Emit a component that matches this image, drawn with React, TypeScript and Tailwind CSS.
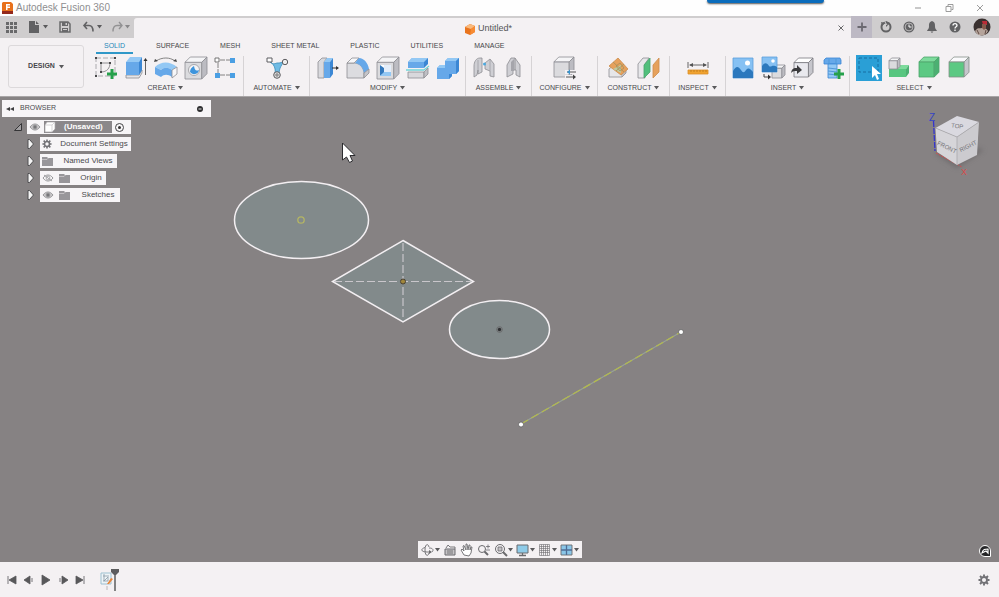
import type { ReactNode } from 'react';

const BLUE = '#66a8e9';
const BLUE_LIGHT = '#93c8f4';
const BLUE_DARK = '#3b87d4';
const INK = '#6b6b6e';

function Icon({ children }: { children: ReactNode }) {
  return (
    <svg viewBox="0 0 24 24" className="size-6 overflow-visible" fill="none" strokeLinejoin="round" aria-hidden="true">
      {children}
    </svg>
  );
}

function Small({ children }: { children: ReactNode }) {
  return (
    <svg viewBox="0 0 14 14" className="size-3.5 shrink-0 overflow-visible" fill="none" aria-hidden="true">
      {children}
    </svg>
  );
}

function Caret() {
  return (
    <svg viewBox="0 0 5 4" className="h-1 w-[5px] shrink-0" aria-hidden="true">
      <path d="M0 0h5L2.500 3.500z" fill="#5a5a5c" />
    </svg>
  );
}

type BoxProps = { front: string; top: string; side: string; line: string; x?: number; y?: number; size?: number };

// small oblique box: front face plus top and right faces
function Box({ front, top, side, line, x = 2, y = 2, size = 20 }: BoxProps) {
  const d = size * 0.24;
  const r = x + size;
  const b = y + size;
  return (
    <g stroke={line} strokeWidth="0.8">
      <path d={`M${x} ${y + d}h${size - d}v${size - d}h${d - size}z`} fill={front} />
      <path d={`M${x} ${y + d}l${d} ${-d}h${size - d}l${-d} ${d}z`} fill={top} />
      <path d={`M${r - d} ${y + d}L${r} ${y}V${b - d}L${r - d} ${b}z`} fill={side} />
    </g>
  );
}

const gray = { front: '#dbdbde', top: '#f5f5f7', side: '#bcbcc2', line: '#8e8e93' };
const green = { front: '#5cc983', top: '#7ddb9c', side: '#4bb072', line: '#4ba36b' };

function Plus({ x, y }: { x: number; y: number }) {
  return <path d={`M${x} ${y - 5}v10M${x - 5} ${y}h10`} stroke="#25a04b" strokeWidth="3" />;
}

const icons: Record<string, ReactNode> = {
  sketch: (
    <>
      <path d="M2 2h19v18H2z" stroke="#9a9a9d" strokeWidth="0.8" strokeDasharray="5 2" />
      <path d="M7 7h9c0 5-3 9-9 9z" stroke="#77777a" strokeWidth="0.8" />
      <path d="M1 1h2v2H1zM20 1h2v2h-2zM1 19h2v2H1zM6 6h2v2H6zM15 6h2v2h-2zM6 15h2v2H6z" fill="#48484a" />
      <Plus x={18} y={18} />
    </>
  ),
  extrude: (
    <>
      <path d="M2 19h13l3-5v3l-3 5H2z" fill="#e5e5e8" stroke="#8e8e93" strokeWidth="0.8" />
      <path d="M2 6h13v13H2z" fill={BLUE} />
      <path d="M2 6l4-5h12l-3 5z" fill={BLUE_LIGHT} />
      <path d="M15 6l3-5v13l-3 5z" fill={BLUE_DARK} />
      <path d="M21.500 19V4" stroke="#555" strokeWidth="0.9" />
      <path d="M19.500 5l2-3 2 3z" fill="#333" />
    </>
  ),
  revolve: (
    <>
      <path d="M2 5C8 1 16 1 21 5" stroke="#777" strokeWidth="0.9" />
      <path d="M0 6l1-3 3 2zM23 6l-1-3-3 2z" fill="#444" />
      <path d="M1 11c6-6 15-6 22 0l-5 3c-4-3-8-3-11 0z" fill={BLUE_LIGHT} />
      <path d="M1 11l6 3c3-3 7-3 11 0v7c-4-3-8-3-11 0l-6-3z" fill={BLUE} />
      <path d="M18 14l5-3v7l-5 4z" fill="#f6f6f8" stroke="#8e8e93" strokeWidth="0.8" />
    </>
  ),
  hole: (
    <>
      <Box {...gray} x={1} y={1} size={22} />
      <circle cx="10" cy="14" r="5.500" fill="#f4f4f6" stroke="#98989d" strokeWidth="0.8" />
      <path d="M10 10c1 5 2 5 5 4a5 5 0 01-9 2c0-3 2-5 4-6z" fill="#3d94dc" />
    </>
  ),
  pattern: (
    <>
      <path d="M6 4h10M4 7v10M6 19h10" stroke="#777" strokeWidth="0.9" strokeDasharray="5 1" />
      <path d="M1 2h4v4H1z" stroke="#666" strokeWidth="0.9" fill="#fff" />
      <path d="M16 2h5v5h-5zM1 17h5v5H1zM16 17h5v5h-5z" fill="#4b9fe3" />
    </>
  ),
  automate: (
    <>
      <path d="M3 3c3 6 6 5 9 4 3 0 5 0 8-3-3 5-6 7-6 15h-4c1-8-1-10-7-16z" fill="#6fbbe4" stroke="#3a8bb9" strokeWidth="0.8" />
      <path d="M2 2h5v4H2z" fill="#fff" stroke="#5d5d60" />
      <circle cx="20" cy="6" r="2.700" fill="#eee" stroke="#5d5d60" />
      <circle cx="12" cy="19" r="3.300" fill="#ddd" stroke="#5d5d60" />
      <circle cx="12" cy="19" r="1.200" stroke="#5d5d60" strokeWidth="0.8" />
    </>
  ),
  presspull: (
    <>
      <path d="M2 6l4-4h5L8 6v16H2z" fill="#d9d9dd" stroke="#8e8e93" strokeWidth="0.8" />
      <path d="M8 6h6v16H8z" fill={BLUE} />
      <path d="M8 6l3-4h6l-3 4z" fill={BLUE_LIGHT} />
      <path d="M14 6l3-4v16l-3 4z" fill={BLUE_DARK} />
      <path d="M16 12h6" stroke="#333" />
      <path d="M20 10l3 2-3 2z" fill="#333" />
    </>
  ),
  fillet: (
    <>
      <path d="M1 7h7c6 0 10 5 10 11v4H1z" fill="#dcdce0" stroke="#8e8e93" strokeWidth="0.8" />
      <path d="M1 7l5-5h7L8 7z" fill="#f7f7f9" stroke="#8e8e93" strokeWidth="0.8" />
      <path d="M9 7l4-5c5 0 9 5 10 11l-5 4c-1-6-4-9-9-10z" fill={BLUE} />
      <path d="M18 17l5-4v4l-5 5z" fill="#c5c5ca" stroke="#8e8e93" strokeWidth="0.8" />
    </>
  ),
  shell: (
    <>
      <Box {...gray} x={1} y={1} size={22} />
      <path d="M4 9h11v11H4z" fill="#fff" />
      <path d="M4 9l4 3v5l-4 3z" fill="#3379bd" />
      <path d="M4 20l4-4h7v4z" fill={BLUE_LIGHT} />
      <path d="M8 9h7v7H8z" fill="#e4eefa" />
    </>
  ),
  split: (
    <>
      <path d="M2 6l4-4h16l-4 4v6H2z" fill={BLUE} />
      <path d="M2 6l4-4h16l-4 4z" fill={BLUE_LIGHT} />
      <path d="M18 6l4-4v6l-4 4z" fill={BLUE_DARK} />
      <path d="M2 16h16v6H2z" fill="#d8d8dc" stroke="#8e8e93" strokeWidth="0.8" />
      <path d="M18 16l4-4v6l-4 4z" fill="#c0c0c5" stroke="#8e8e93" strokeWidth="0.8" />
      <path d="M0 14h18l5-4" stroke="#72d5d8" strokeWidth="1.300" />
    </>
  ),
  combine: (
    <>
      <path d="M1 12l3-3h5V5l3-3h11v13l-3 3h-4v2l-3 3H1z" fill={BLUE} />
      <path d="M1 12l3-3h5v3zM9 5l3-3h11l-3 3z" fill={BLUE_LIGHT} />
      <path d="M20 5l3-3v13l-3 3zM13 18h3v2l-3 3z" fill={BLUE_DARK} />
    </>
  ),
  joint: (
    <>
      <path d="M2 10c0-4 2-8 6-8h2v14l-4 2v-4l-1 5-3 2z" fill="#cfcfd4" stroke="#8e8e93" strokeWidth="0.8" />
      <path d="M6 4v12" stroke="#9f9fa4" strokeWidth="0.8" />
      <path d="M13 7l5-4 4 5v13l-4-1v-5l-5-2z" fill="#cfcfd4" stroke="#8e8e93" strokeWidth="0.8" />
      <path d="M18 3v12" stroke="#9f9fa4" strokeWidth="0.8" />
      <circle cx="12.500" cy="8" r="1.500" fill="#4ba9df" />
    </>
  ),
  asbuilt: (
    <>
      <path d="M5 21V9l4-7h4l5 7v12l-4-2v-5h-3v4z" fill="#cfcfd4" stroke="#8e8e93" strokeWidth="0.8" />
      <path d="M13 2v12" stroke="#8e8e93" strokeWidth="0.9" />
      <path d="M9 6l3-3v12H9z" fill="#a5a5ab" />
    </>
  ),
  configure: (
    <>
      <Box {...gray} x={1} y={1} size={20} />
      <path d="M12 16h12M12 21h12" stroke="#f4f1f3" strokeWidth="4" />
      <path d="M14 16h9M13 21h9" stroke="#444" strokeWidth="0.9" />
      <path d="M17 13.500v5l-3-2.500z" fill="#3792cc" />
      <path d="M20 18.500v5l3-2.500z" fill="#444" />
    </>
  ),
  offsetPlane: (
    <>
      <path d="M2 13l5-4h8v12H2z" fill="#e6e6e9" stroke="#8e8e93" strokeWidth="0.8" />
      <path d="M15 12l4 1v4l-4 4" fill="#c0c0c5" stroke="#8e8e93" strokeWidth="0.8" />
      <path d="M2 10l9-8 10 11-7 6z" fill="#e6a15c" stroke="#cd8d4b" strokeWidth="0.8" />
      <path d="M6 13l8-4v8z" fill="#bdc9a0" />
      <path d="M6 6l11 10M17 8l-8 7M9 10l4-3 4 5-4 3z" stroke="#a5905a" strokeWidth="0.8" />
    </>
  ),
  midPlane: (
    <>
      <path d="M1 8l5-6h6L8 8v14H1z" fill="#e7e7ea" stroke="#8e8e93" strokeWidth="0.8" />
      <path d="M7 9l6-7v14l-6 6z" fill="#50bf7c" stroke="#46a56c" strokeWidth="0.8" />
      <path d="M16 9l6-7v14l-6 6z" fill="#e6a15c" stroke="#cd8d4b" strokeWidth="0.8" />
    </>
  ),
  measure: (
    <>
      <path d="M2 6v6M22 6v6M4 9h16" stroke="#555" strokeWidth="0.9" />
      <path d="M3 9l4-2v4zM21 9l-4-2v4z" fill="#555" />
      <path d="M2 14h20v4H2z" fill="#f0a330" stroke="#dd9127" strokeWidth="0.8" />
      <path d="M5 14v2M8 14v2M11 14v2M14 14v2M17 14v2M20 14v2" stroke="#b9761b" strokeWidth="0.8" />
    </>
  ),
  canvas: (
    <>
      <path d="M2 2h20v20H2z" fill="#86c1f3" stroke="#5c9edb" strokeWidth="0.8" />
      <path d="M2 15c3-5 5-5 8-1 2 3 3 3 5 0 3-3 4-1 7 2v6H2z" fill="#2b78bd" />
      <circle cx="16.500" cy="7" r="2.500" fill="#fff" />
    </>
  ),
  decal: (
    <>
      <Box {...gray} x={11} y={9} size={13} />
      <path d="M1 1h15v15H1z" fill="#86c1f3" stroke="#5c9edb" strokeWidth="0.8" />
      <path d="M1 10c3-4 5-3 7 0 2 2 3-2 8 1v5H1z" fill="#2b78bd" />
      <circle cx="12" cy="5" r="1.800" fill="#fff" />
      <path d="M3 18v3h5" stroke="#444" />
      <path d="M7 18.500l3 2.500-3 2.500z" fill="#333" />
    </>
  ),
  insert: (
    <>
      <Box front="#e9e9ee" top="#fff" side="#c6c6cc" line="#7a7a7f" x={3} y={2} size={19} />
      <path d="M0 17c1-5 3-5 6-5V9l5 5-5 4v-3c-3 0-4 0-6 2z" fill="#3b3b3d" />
    </>
  ),
  fastener: (
    <>
      <path d="M3 4l2-2h14l1 2v4H3z" fill={BLUE} stroke={BLUE_DARK} strokeWidth="0.8" />
      <path d="M7 8h9v14H7z" fill={BLUE_LIGHT} stroke={BLUE_DARK} strokeWidth="0.8" />
      <path d="M7 12l9 1M7 15l9 1M7 18l9 1M8 3v5M15 3v5" stroke="#5199d9" />
      <Plus x={18} y={18} />
    </>
  ),
  select: (
    <>
      <path d="M-1-1h26v26H-1z" fill="#2a9fd6" />
      <path d="M2 2h19v14H2z" stroke="#176fa2" strokeDasharray="3 2" />
      <path d="M15 10v12l3-3 2 5 2-1-2-5h4z" fill="#fff" />
    </>
  ),
  bodies: (
    <>
      <path d="M2 13h17v8H2z" fill="#58c680" />
      <path d="M10 13l3-4h9l-3 4z" fill="#7ddb9c" />
      <path d="M19 13l3-4v8l-3 4z" fill="#4bb072" />
      <Box {...gray} x={2} y={2} size={11} />
    </>
  ),
  solidBody: <Box {...green} x={2} y={1} size={20} />,
  face: <Box front="#5cc983" top="#fafafc" side="#c6c6cc" line="#859089" x={2} y={1} size={20} />,
};

const groups = [
  { name: 'CREATE', width: 'w-[156px]', tools: ['sketch', 'extrude', 'revolve', 'hole', 'pattern'] },
  { name: 'AUTOMATE', width: 'w-[66px]', tools: ['automate'] },
  { name: 'MODIFY', width: 'w-[156px]', tools: ['presspull', 'fillet', 'shell', 'split', 'combine'] },
  { name: 'ASSEMBLE', width: 'w-[66px]', tools: ['joint', 'asbuilt'] },
  { name: 'CONFIGURE', width: 'w-[66px]', tools: ['configure'] },
  { name: 'CONSTRUCT', width: 'w-[72px]', tools: ['offsetPlane', 'midPlane'] },
  { name: 'INSPECT', width: 'w-14', tools: ['measure'] },
  { name: 'INSERT', width: 'w-[124px]', tools: ['canvas', 'decal', 'insert', 'fastener'] },
  { name: 'SELECT', width: 'w-32', tools: ['select', 'bodies', 'solidBody', 'face'] },
];

const tabs = ['SOLID', 'SURFACE', 'MESH', 'SHEET METAL', 'PLASTIC', 'UTILITIES', 'MANAGE'];

function TitleBar() {
  return (
    <header className="relative flex h-4 items-center bg-[#fefefe] pr-3">
      <svg viewBox="0 0 12 12" className="ml-0.5 size-3" aria-hidden="true">
        <path d="M0 1l1-1h8l2 2v9l-1 1H1l-1-1z" fill="#e8711c" />
        <path d="M0 9h11v3H0z" fill="#93281c" />
        <path d="M4 2h4v1.500H5.500v1H8V6H5.500v2H4z" fill="#fff" />
      </svg>
      <h1 className="ml-0.5 flex-1 text-[10px] leading-4 text-[#8e8e90]">Autodesk Fusion 360</h1>
      <div className="absolute top-0 right-[175px] h-[3px] w-[117px] rounded-b-sm bg-[#0a6cbc] shadow-[0_1px_2px_#555]" />
      <div className="flex gap-[17px]">
        <button aria-label="Minimize">
          <Small>
            <path d="M4 7h6" stroke="#929292" />
          </Small>
        </button>
        <button aria-label="Restore">
          <Small>
            <path d="M4 5.500h5v5H4zM6 5V3.500h5v5H9.500" stroke="#929292" strokeWidth="0.9" />
          </Small>
        </button>
        <button aria-label="Close">
          <Small>
            <path d="M4 4l6 6M10 4l-6 6" stroke="#929292" strokeWidth="0.9" />
          </Small>
        </button>
      </div>
    </header>
  );
}

function DocumentBar() {
  return (
    <div className="flex h-[22px] bg-[#cfcdce]">
      <div className="flex w-[134px] items-center pl-1">
        <button aria-label="Data panel">
          <Small>
            <path d="M2 2h3v3H2zM6 2h3v3H6zM10 2h3v3h-3zM2 6h3v3H2zM6 6h3v3H6zM10 6h3v3h-3zM2 10h3v3H2zM6 10h3v3H6zM10 10h3v3h-3z" fill="#69696b" />
          </Small>
        </button>
        <button aria-label="File" className="ml-2.5 flex items-center gap-px">
          <Small>
            <path d="M1 1h6v4h4v8H1zM8 1l3 3H8z" fill="#626264" />
          </Small>
          <Caret />
        </button>
        <button aria-label="Save" className="ml-2.5">
          <Small>
            <path d="M2 2h8l2 2v8H2z" stroke="#69696b" strokeWidth="1.500" />
            <path d="M4 2h6v4H4zM4 8h6v4H4z" fill="#69696b" />
            <path d="M7.500 3h1.500v2H7.500zM5 9h4v1H5z" fill="#cfcdce" />
          </Small>
        </button>
        <button aria-label="Undo" className="ml-2.5 flex items-center gap-px">
          <Small>
            <path d="M5 2L2 5.500 5 9M2 5.500h5c3 0 4 2 4 6" stroke="#626264" strokeWidth="1.600" />
          </Small>
          <Caret />
        </button>
        <button aria-label="Redo" className="ml-2 flex items-center gap-px opacity-60">
          <Small>
            <path d="M9 2l3 3.500L9 9M12 5.500H7c-3 0-4 2-4 6" stroke="#6b6b6d" strokeWidth="1.400" />
          </Small>
          <Caret />
        </button>
      </div>
      <div className="mt-0.5 flex flex-1 items-center rounded-tl-[3px] bg-[#f4f1f3] pr-1">
        <div className="flex flex-1 items-center justify-center gap-[3px] pt-0.5 pl-2 text-[9px] text-[#555557]">
          <svg viewBox="0 0 10 11" className="h-[11px] w-2.5" aria-hidden="true">
            <path d="M0 3l5-3 5 2v6L5 11 0 9z" fill="#e9741d" />
            <path d="M0 3l5-3 5 2-4 3z" fill="#f9ba7d" />
            <path d="M6 5l4-3v6l-5 3z" fill="#f78b33" />
          </svg>
          Untitled*
        </div>
        <button aria-label="Close document">
          <svg viewBox="0 0 12 12" className="size-3" aria-hidden="true">
            <path d="M3.500 3.500l5 5M8.500 3.500l-5 5" stroke="#68686a" />
          </svg>
        </button>
      </div>
      <button aria-label="New document" className="flex w-[21px] items-center justify-center bg-[#bdb9c4]">
        <svg viewBox="0 0 10 10" className="size-2.5" aria-hidden="true">
          <path d="M5 .5v9M.5 5h9" stroke="#6b6971" strokeWidth="1.800" />
        </svg>
      </button>
      <div className="flex items-center gap-[9px] pr-2 pl-[7px]">
        <button aria-label="Extensions">
          <Small>
            <circle cx="7" cy="7" r="4.500" stroke="#626264" strokeWidth="2" />
            <path d="M7 7V1l4 2zM2 2l4 1-3 3z" fill="#626264" />
            <path d="M6 2l2 3" stroke="#cfcdce" />
          </Small>
        </button>
        <button aria-label="Job status">
          <Small>
            <circle cx="7" cy="7" r="5.500" fill="#626264" />
            <circle cx="7" cy="7" r="3.900" stroke="#cfcdce" strokeWidth="0.8" />
            <path d="M7 4.500V7h2.500" stroke="#fff" />
          </Small>
        </button>
        <button aria-label="Notifications">
          <Small>
            <path d="M7 1c3 1 3 3 3 5 0 3 1 3 2 5H2c1-2 2-2 2-5 0-2 0-4 3-5zM5.500 11.500h3L7 13z" fill="#626264" />
          </Small>
        </button>
        <button aria-label="Help">
          <Small>
            <circle cx="7" cy="7" r="5.500" fill="#626264" />
            <path d="M5 5.500C5 3 9 3 9 5.500 9 7 7 6.500 7 8.500M7 9.500V11" stroke="#fff" strokeWidth="1.300" />
          </Small>
        </button>
        <button aria-label="Account" className="ml-0.5">
          <svg viewBox="0 0 18 18" className="size-[18px]" aria-hidden="true">
            <circle cx="9" cy="9" r="8.500" fill="#39302f" />
            <path d="M2 13c3-4 4-2 7-3 3 0 4 0 6 3-3 6-10 6-13 0z" fill="#b5a49b" />
            <path d="M9 3h5v4h-4z" fill="#bb2c38" />
            <path d="M9 6h4v4l-2 2-2-2z" fill="#85594b" />
            <path d="M4 12l2 4M13 12l-1 4" stroke="#604a43" />
          </svg>
        </button>
      </div>
    </div>
  );
}

function Ribbon() {
  return (
    <div className="flex h-[59px] border-b border-[#a8a5a6] bg-[#f4f1f3] text-[7px] text-[#47474a]">
      <button className="mt-[7px] mr-1 ml-2 flex h-[43px] w-[76px] items-center justify-center gap-1 rounded-[3px] border border-[#dcd9db] font-bold">
        DESIGN <Caret />
      </button>
      <div className="flex-1">
        <nav className="flex h-4 gap-[15px] pl-2">
          {tabs.map((tab) => (
            <button
              key={tab}
              className={tab === 'SOLID' ? 'border-b-2 border-[#3098c8] px-2 pt-0.5 text-[#2487b8]' : 'border-b-2 border-transparent px-2 pt-0.5'}
            >
              {tab}
            </button>
          ))}
        </nav>
        <div className="mt-0.5 flex">
          {groups.map(({ name, width, tools }) => (
            <div key={name} className={`${width} shrink-0 border-[#d6d3d5] not-last:border-r`}>
              <div className="flex justify-center gap-1.5">
                {tools.map((tool) => (
                  <button key={tool} aria-label={tool}>
                    <Icon>{icons[tool]}</Icon>
                  </button>
                ))}
              </div>
              <button className="flex h-4 w-full items-center justify-center gap-[3px]">
                {name} <Caret />
              </button>
            </div>
          ))}
        </div>
      </div>
    </div>
  );
}

function Eye({ off = false }: { off?: boolean }) {
  return (
    <svg viewBox="0 0 12 10" className="h-2.5 w-3 shrink-0" fill="none" aria-hidden="true">
      <path d="M1 5c3-4 7-4 10 0-3 4-7 4-10 0z" stroke="#98989b" fill={off ? 'none' : '#c9c7c9'} />
      <circle cx="6" cy="5" r="1.900" fill={off ? 'none' : '#77777a'} stroke="#98989b" strokeWidth="0.8" />
      {off && <path d="M2 2l8 6" stroke="#98989b" strokeWidth="0.9" />}
    </svg>
  );
}

function Folder() {
  return (
    <svg viewBox="0 0 12 10" className="h-2.5 w-3 shrink-0" aria-hidden="true">
      <path d="M0 1h5l1 1h5v8H0z" fill="#98969a" />
      <path d="M0 3.500h5L6.500 2" stroke="#d5d3d6" strokeWidth="0.7" fill="none" />
    </svg>
  );
}

function Gear({ className }: { className: string }) {
  return (
    <svg viewBox="0 0 12 12" className={className} fill="none" aria-hidden="true">
      <circle cx="6" cy="6" r="3" stroke="#717175" strokeWidth="1.900" />
      <path d="M6 .5v2M6 9.500v2M.5 6h2M9.500 6h2M2 2l1.500 1.500M8.500 8.500L10 10M10 2L8.500 3.500M3.500 8.500L2 10" stroke="#717175" strokeWidth="1.900" />
    </svg>
  );
}

const nodes = [
  { label: 'Document Settings', width: 'w-[91px]', icon: <Gear className="size-2.5 shrink-0" /> },
  { label: 'Named Views', width: 'w-[77px]', icon: <Folder /> },
  { label: 'Origin', width: 'w-[66px]', icon: <><Eye off /><Folder /></> },
  { label: 'Sketches', width: 'w-20', icon: <><Eye /><Folder /></> },
];

function BrowserPanel() {
  return (
    <aside className="absolute top-[3px] left-0.5 w-[209px] text-[8px] text-[#4a4a4d]">
      <div className="flex h-[17px] items-center bg-[#f7f5f7] pr-[7px] pl-1">
        <svg viewBox="0 0 8 6" className="h-1.5 w-2" aria-hidden="true">
          <path d="M4 1v4L0 3zM8 1v4L4 3z" fill="#3e3e40" />
        </svg>
        <h2 className="ml-1.5 flex-1 text-[7px]">BROWSER</h2>
        <button aria-label="Collapse">
          <svg viewBox="0 0 8 8" className="size-2" aria-hidden="true">
            <circle cx="4" cy="4" r="3" fill="#2d2d2f" />
            <path d="M2.500 4h3" stroke="#fff" strokeWidth="0.9" />
          </svg>
        </button>
      </div>
      <ul className="mt-[3px] flex flex-col gap-[3px]">
        <li className="flex h-3.5 items-center pl-3">
          <svg viewBox="0 0 8 8" className="mr-[5px] size-2" aria-hidden="true">
            <path d="M7.500.5v7h-7z" fill="#a09ea0" stroke="#353537" />
          </svg>
          <div className="flex h-full w-[104px] items-center gap-[3px] bg-[#f7f5f7] pl-0.5">
            <Eye />
            <div className="flex h-3 w-[68px] items-center gap-2 bg-[#8b888b] font-bold text-white">
              <svg viewBox="0 0 12 12" className="size-3" aria-hidden="true">
                <path d="M1 4l2-3h8v7l-3 3H1z" fill="#fff" stroke="#aaa8aa" strokeWidth="0.7" />
                <path d="M1 4h7v7M8 4l3-3" fill="none" stroke="#c5c3c5" strokeWidth="0.7" />
              </svg>
              (Unsaved)
            </div>
            <input
              type="radio"
              aria-label="Activate component"
              defaultChecked
              className="size-[9px] shrink-0 appearance-none rounded-full border border-[#454547] bg-[#333] bg-clip-content p-0.5"
            />
          </div>
        </li>
        {nodes.map(({ label, width, icon }) => (
          <li key={label} className="flex h-3.5 items-center pl-[25px]">
            <svg viewBox="0 0 7 10" className="mr-1.5 h-2.5 w-[7px]" aria-hidden="true">
              <path d="M1 .5h1.500L6.500 5l-4 4.500H1z" fill="#f5f5f5" stroke="#4e4e50" />
            </svg>
            <div className={`${width} flex h-full items-center gap-[5px] bg-[#f7f5f7] pl-0.5`}>
              {icon}
              <span className="flex-1 text-center whitespace-nowrap">{label}</span>
            </div>
          </li>
        ))}
      </ul>
    </aside>
  );
}

function Sketches() {
  return (
    <svg viewBox="0 0 999 465" className="absolute top-0 left-0 h-[465px] w-[999px]" fill="none" aria-hidden="true">
      <g fill="#828a8b" stroke="#f3eff2" strokeWidth="1.500">
        <ellipse cx="301.500" cy="123" rx="67" ry="38.500" />
        <path d="M403 143.500L473.500 184.500 403 225 332.500 184.500z" />
        <ellipse cx="499.500" cy="232.500" rx="50" ry="29" />
      </g>
      <path d="M334 184.500h137M403 146v77" stroke="#c9c6cb" strokeWidth="1.200" strokeDasharray="8 3" />
      <circle cx="301" cy="123" r="3.200" stroke="#b4b564" strokeWidth="1.300" />
      <circle cx="403" cy="184.500" r="2.500" fill="#a0863a" stroke="#494033" />
      <circle cx="499.500" cy="232.500" r="2.800" stroke="#69696b" fill="#828a8b" />
      <circle cx="499.500" cy="232.500" r="1.700" fill="#2e2e30" />
      <path d="M521 327L681 235" stroke="#98a198" strokeWidth="1.200" />
      <path d="M521 327L681 235" stroke="#b3bb4c" strokeWidth="1.200" strokeDasharray="8 4" />
      <g fill="#fff" stroke="#555" strokeWidth="0.7">
        <circle cx="521" cy="327.500" r="2.500" />
        <circle cx="681" cy="235" r="2.500" />
      </g>
      <path d="M342.500 46v17l4-3 3 5.500 3-1.500-2.500-5.500h5z" fill="#fff" stroke="#2c2c2f" />
    </svg>
  );
}

function ViewCube() {
  return (
    <svg viewBox="0 0 75 80" className="absolute top-[3px] right-0 h-20 w-[75px]" fontFamily="Liberation Sans, sans-serif" aria-label="View cube">
      <defs>
        <filter id="cubeShadow" x="-30%" y="-30%" width="160%" height="160%">
          <feGaussianBlur stdDeviation="2.500" />
        </filter>
      </defs>
      <path d="M10 53l22-11 28 8-27 18z" fill="#625f61" opacity="0.6" filter="url(#cubeShadow)" />
      <path d="M9.500 21l1.500 30" stroke="#3434cf" strokeWidth="1.300" strokeDasharray="6 1" />
      <path d="M12 53l26 14" stroke="#d64c4c" strokeDasharray="2 1" />
      <path d="M11.500 28L33 16l22 6-22 15z" fill="#dad9e0" />
      <path d="M11.500 28L33 37v28L13 52z" fill="#d6d5d9" />
      <path d="M33 37l22-15-2 33-20 10z" fill="#cccbcf" />
      <path d="M11.500 28L33 37l22-15M33 37v28" stroke="#a9a8ac" strokeWidth="0.8" fill="none" />
      <g fontSize="6" fill="#77767a" textAnchor="middle">
        <text transform="translate(33 28) rotate(8)">TOP</text>
        <text transform="translate(22 49) rotate(26)">FRONT</text>
        <text transform="translate(45 48) rotate(-27)">RIGHT</text>
      </g>
      <text x="5" y="21" fontSize="10" fill="#3544c4">Z</text>
      <text x="37" y="75" fontSize="9" fill="#d64c4c">X</text>
    </svg>
  );
}

const navTools: { name: string; menu: boolean; drawing: ReactNode }[] = [
  {
    name: 'Orbit',
    menu: true,
    drawing: (
      <>
        <path d="M8 4C7 0 4 1 4 7s3 7 4 3" stroke={INK} strokeWidth="0.9" />
        <path d="M4 4.500C-1 6 0 9 6 9h4" stroke={INK} strokeWidth="0.9" />
        <path d="M8 5c4 0 5 2 3 4" stroke={INK} strokeWidth="0.9" />
        <path d="M8 7l3 2-3 2z" fill={INK} />
      </>
    ),
  },
  {
    name: 'Look at',
    menu: false,
    drawing: (
      <>
        <path d="M2 6h10v6H2z" fill="#c5c3c6" stroke={INK} />
        <path d="M3 5l2-3 2 2h5v2M4 8h6M4 10h6" stroke={INK} strokeWidth="0.9" />
      </>
    ),
  },
  {
    name: 'Pan',
    menu: false,
    drawing: <path d="M4 12L1 7l1-1 2 2-1-5 1-.5L6 7V1h1l1 6 1-5h1v5l1-3h1l-1 6-2 3z" stroke={INK} strokeWidth="0.9" fill="#fff" />,
  },
  {
    name: 'Zoom',
    menu: false,
    drawing: (
      <>
        <circle cx="5" cy="6" r="3.500" stroke={INK} />
        <path d="M7.500 8.500L11 12" stroke={INK} strokeWidth="2" />
        <path d="M9 3.500h4M11 1.500v4M9 7h4" stroke={INK} strokeWidth="0.8" />
      </>
    ),
  },
  {
    name: 'Fit',
    menu: true,
    drawing: (
      <>
        <circle cx="6" cy="6" r="4.500" stroke={INK} />
        <path d="M4 4h4v4H4z" fill="#c3c1c4" stroke={INK} strokeWidth="0.8" />
        <path d="M9 9l4 4" stroke={INK} strokeWidth="2" />
      </>
    ),
  },
  {
    name: 'Display settings',
    menu: true,
    drawing: (
      <>
        <path d="M1 2h11v8H1z" fill="#8ecbe8" stroke={INK} />
        <path d="M6.500 10v2M3 12.500h7" stroke={INK} strokeWidth="1.300" />
      </>
    ),
  },
  {
    name: 'Grid and snaps',
    menu: true,
    drawing: <path d="M1.500 1.500h10v11h-10zM1.500 3.500h10M1.500 5.500h10M1.500 7.500h10M1.500 9.500h10M3.500 1.500v11M5.500 1.500v11M7.500 1.500v11M9.500 1.500v11" stroke={INK} strokeWidth="0.6" />,
  },
  {
    name: 'Viewports',
    menu: true,
    drawing: (
      <>
        <path d="M1 2h11v10H1z" fill="#8ac6e8" stroke={INK} strokeWidth="0.9" />
        <path d="M6.500 2v10M1 7h11" stroke="#4f6d95" strokeWidth="1.300" />
      </>
    ),
  },
];

const playback = [
  { name: 'Go to start', d: 'M3 3v8M4 7l7-4v8z' },
  { name: 'Step back', d: 'M2 7l6-4v8zM10 5v4' },
  { name: 'Play', d: 'M3 2l8 5-8 5z' },
  { name: 'Step forward', d: 'M12 7L6 3v8zM4 5v4' },
  { name: 'Go to end', d: 'M11 3v8M10 7L3 3v8z' },
];

function Timeline() {
  return (
    <footer className="flex h-[35px] items-center bg-[#f4f1f3] pr-[9px] pl-[5px]">
      <div className="flex gap-[3px]">
        {playback.map(({ name, d }) => (
          <button key={name} aria-label={name}>
            <Small>
              <path d={d} fill="#58585a" stroke="#58585a" strokeWidth="0.8" />
            </Small>
          </button>
        ))}
      </div>
      <button aria-label="Sketch feature" className="ml-[13px]">
        <svg viewBox="0 0 20 24" className="h-6 w-5" fill="none" aria-hidden="true">
          <path d="M1 5h10v11H1z" stroke="#9dc0d1" fill="#eef4f7" />
          <path d="M3 8h6M4 6v7l4-4v4H3" stroke="#899ba6" strokeWidth="0.8" />
          <path d="M7 16l4-6 2 1-4 5z" fill="#e98538" />
          <path d="M7 18v4" stroke="#bab8ba" />
          <path d="M11 1h8v3l-3 3h-2l-3-3z" fill="#5c5c5e" />
          <path d="M15 6v17" stroke="#5c5c5e" strokeWidth="1.500" />
        </svg>
      </button>
      <button aria-label="Timeline settings" className="ml-auto">
        <Gear className="size-3" />
      </button>
    </footer>
  );
}

export default function App() {
  return (
    <div className="flex h-screen flex-col overflow-hidden bg-[#868283] font-['Liberation_Sans',Arial,sans-serif]">
      <TitleBar />
      <DocumentBar />
      <Ribbon />
      <main className="relative flex flex-1 items-end justify-center overflow-hidden">
        <Sketches />
        <BrowserPanel />
        <ViewCube />
        <div className="relative mb-1 flex h-[17px] items-center gap-[3px] bg-[#f4f1f3] px-[3px]">
          {navTools.map(({ name, menu, drawing }) => (
            <button key={name} aria-label={name} className="flex items-center">
              <Small>{drawing}</Small>
              {menu && <Caret />}
            </button>
          ))}
        </div>
        <button aria-label="Assistant" className="absolute right-2 bottom-[5px]">
          <svg viewBox="0 0 12 12" className="size-3" aria-hidden="true">
            <path d="M6 .5a5.500 5.500 0 100 11h5.500V6A5.500 5.500 0 006 .5z" fill="#252527" stroke="#fff" />
            <path d="M3 8c1-4 3-4 6-4v4L7 6z" fill="none" stroke="#fff" strokeWidth="1.200" />
          </svg>
        </button>
      </main>
      <Timeline />
    </div>
  );
}
